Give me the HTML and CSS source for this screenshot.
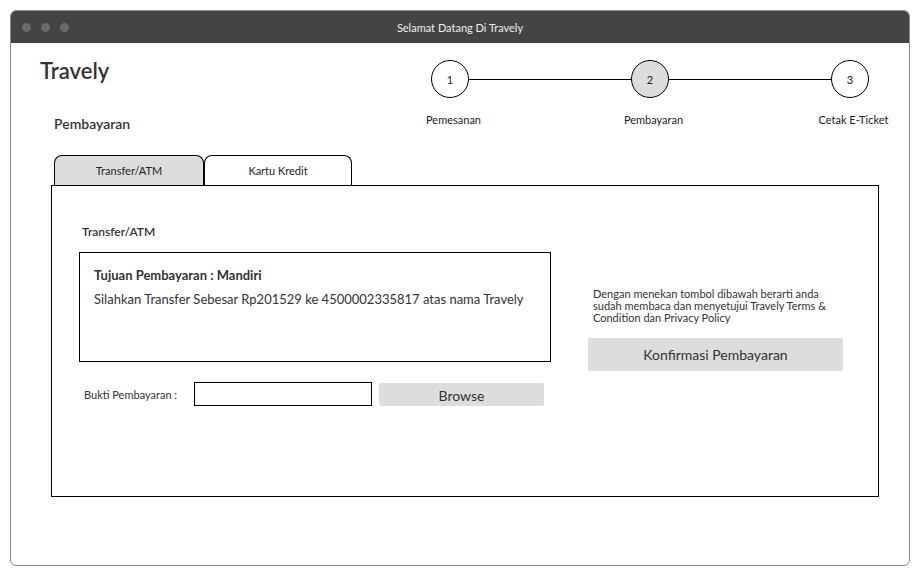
FILE: index.html
```html
<!DOCTYPE html>
<html lang="id">
<head>
  <meta charset="UTF-8">
  <title>Selamat Datang Di Travely</title>
  <link rel="stylesheet" href="styles.css">
</head>
<body>
  <div class="window">
    <div class="titlebar">
      <div class="dots"><span></span><span></span><span></span></div>
      <div class="title">Selamat Datang Di Travely</div>
    </div>

    <div class="page">
      <div class="header">
        <div class="brand">
          <h1>Travely</h1>
          <h2>Pembayaran</h2>
        </div>
        <div class="stepper">
          <div class="step">1</div>
          <div class="line"></div>
          <div class="step current">2</div>
          <div class="line"></div>
          <div class="step">3</div>
          <div class="label first">Pemesanan</div>
          <div class="label second">Pembayaran</div>
          <div class="label third">Cetak E-Ticket</div>
        </div>
      </div>

      <div class="tabs">
        <div class="tab active">Transfer/ATM</div>
        <div class="tab">Kartu Kredit</div>
      </div>

      <div class="panel">
        <div class="left">
          <h3>Transfer/ATM</h3>
          <div class="info">
            <p class="bank">Tujuan Pembayaran : Mandiri</p>
            <p>Silahkan Transfer Sebesar Rp201529 ke 4500002335817 atas nama Travely</p>
          </div>
          <div class="upload">
            <label>Bukti Pembayaran :</label>
            <input type="text">
            <button class="btn browse">Browse</button>
          </div>
        </div>
        <div class="right">
          <p class="terms">Dengan menekan tombol dibawah berarti anda sudah membaca dan menyetujui Travely Terms &amp; Condition dan Privacy Policy</p>
          <button class="btn confirm">Konfirmasi Pembayaran</button>
        </div>
      </div>
    </div>
  </div>
</body>
</html>
```

FILE: styles.css
```css
body {
  margin: 0;
  padding: 10px;
  background: #fff;
  font-family: Lato, "Liberation Sans", sans-serif;
  color: #333;
}
.window {
  width: 900px;
  height: 556px;
  border: 1px solid #8a8a8a;
  border-radius: 6px;
  box-sizing: border-box;
  overflow: hidden;
}
.titlebar {
  height: 32px;
  background: #444;
  display: flex;
  align-items: center;
  position: relative;
}
.dots {
  display: flex;
  gap: 10px;
  padding-left: 11px;
}
.dots span {
  width: 9px;
  height: 9px;
  border-radius: 50%;
  background: #6a6a6a;
}
.title {
  position: absolute;
  left: 0;
  right: 0;
  text-align: center;
  color: #eee;
  font-size: 11px;
}
.page {
  padding: 14px 0 0 29px;
}
.header {
  display: flex;
}
.brand h1 {
  margin: 0;
  font-size: 22px;
  font-weight: 600;
  line-height: 28px;
}
.brand h2 {
  margin: 30px 0 0 14px;
  font-size: 14px;
  font-weight: 600;
  line-height: 18px;
}
.stepper {
  margin-left: auto;
  margin-right: 40px;
  margin-top: 3px;
  display: grid;
  grid-template-columns: 38px 162px 38px 162px 38px;
  grid-template-rows: 38px auto;
  row-gap: 15px;
}
.step {
  width: 36px;
  height: 36px;
  border: 1px solid #000;
  border-radius: 50%;
  display: flex;
  align-items: center;
  justify-content: center;
  font-size: 11px;
  color: #222;
}
.step.current {
  background: #ddd;
}
.line {
  height: 1px;
  background: #000;
  align-self: center;
}
.label {
  font-size: 11px;
  white-space: nowrap;
  justify-self: center;
  grid-row: 2;
  padding-left: 7px;
  color: #222;
}
.label.first { grid-column: 1; }
.label.second { grid-column: 3; }
.label.third { grid-column: 5; }
.tabs {
  display: flex;
  margin: 22px 0 0 14px;
}
.tab {
  width: 148px;
  height: 30px;
  border: 1px solid #000;
  border-bottom: none;
  border-radius: 8px 8px 0 0;
  box-sizing: border-box;
  display: flex;
  align-items: center;
  justify-content: center;
  font-size: 11px;
  color: #222;
  background: #fff;
}
.tab.active {
  background: #ddd;
  width: 150px;
}
.panel {
  margin-left: 11px;
  width: 828px;
  height: 312px;
  border: 1px solid #000;
  box-sizing: border-box;
  display: flex;
}
.left {
  padding: 38px 0 0 27px;
}
.left h3 {
  margin: 0 0 12px 3px;
  font-size: 12px;
  font-weight: 600;
  line-height: 16px;
}
.info {
  width: 472px;
  height: 110px;
  border: 1px solid #000;
  box-sizing: border-box;
  padding: 14px 14px;
}
.info p {
  margin: 0;
  font-size: 13px;
  line-height: 17px;
}
.info .bank {
  font-weight: 700;
  margin-bottom: 7px;
}
.upload {
  display: flex;
  align-items: center;
  margin-top: 20px;
  padding-left: 5px;
}
.upload label {
  font-size: 11px;
  width: 110px;
}
.upload input {
  width: 178px;
  height: 24px;
  border: 1px solid #000;
  box-sizing: border-box;
  margin: 0;
}
.btn {
  border: none;
  background: #ddd;
  border-radius: 2px;
  font-family: inherit;
  color: #333;
  font-size: 14px;
}
.browse {
  width: 165px;
  height: 23px;
  margin-left: 7px;
  padding-top: 3px;
}
.right {
  padding: 102px 0 0 37px;
}
.terms {
  margin: 0 0 14px 5px;
  width: 255px;
  font-size: 11px;
  line-height: 12px;
}
.confirm {
  width: 255px;
  height: 33px;
}
```
